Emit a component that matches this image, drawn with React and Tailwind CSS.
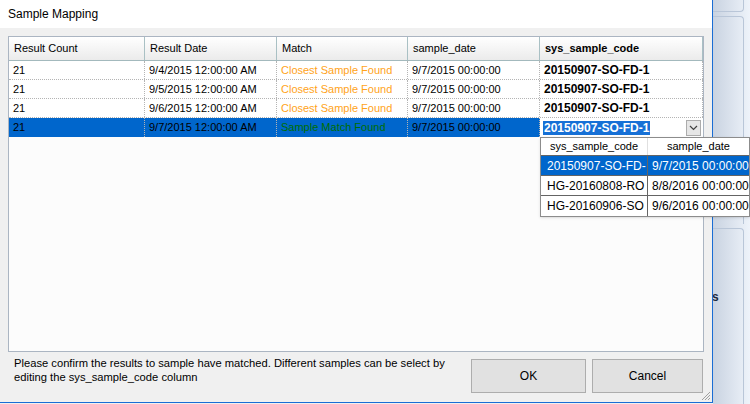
import React from 'react'

const columns = [
  { label: 'Result Count', w: 'w-[136px]' },
  { label: 'Result Date', w: 'w-[132px]' },
  { label: 'Match', w: 'w-[131px]' },
  { label: 'sample_date', w: 'w-[132px]' },
  { label: 'sys_sample_code', w: 'flex-1', bold: true },
]

const rows = [
  { count: '21', date: '9/4/2015 12:00:00 AM', match: 'Closest Sample Found', sdate: '9/7/2015 00:00:00', code: '20150907-SO-FD-1' },
  { count: '21', date: '9/5/2015 12:00:00 AM', match: 'Closest Sample Found', sdate: '9/7/2015 00:00:00', code: '20150907-SO-FD-1' },
  { count: '21', date: '9/6/2015 12:00:00 AM', match: 'Closest Sample Found', sdate: '9/7/2015 00:00:00', code: '20150907-SO-FD-1' },
]

const options = [
  { code: '20150907-SO-FD-', date: '9/7/2015 00:00:00', selected: true },
  { code: 'HG-20160808-RO', date: '8/8/2016 00:00:00' },
  { code: 'HG-20160906-SO', date: '9/6/2016 00:00:00' },
]

function Cell({ w, children, className = '' }) {
  return (
    <div className={`${w} h-full flex items-center pl-[4px] border-r border-dotted border-[#b4b4b4] whitespace-nowrap overflow-hidden ${className}`}>
      {children}
    </div>
  )
}

export default function App() {
  return (
    <div
      className="relative w-[750px] h-[404px] flex overflow-hidden bg-[#f0f0f0] text-[11px] text-black"
      style={{ fontFamily: '"Liberation Sans", Arial, sans-serif' }}
    >
      {/* dialog */}
      <div className="relative w-[713px] h-[403px] flex flex-col border-r border-b border-[#1a6dd4]">
        <div className="h-[28px] bg-white flex items-center pl-[8px] text-[12px] shrink-0">Sample Mapping</div>

        <div className="flex-1 flex flex-col px-[8px] pt-[8px]">
          {/* grid */}
          <div className="w-[696px] h-[316px] border border-[#abb5c2] bg-[#fcfcfc] flex flex-col">
            <div className="h-[24px] flex border-b border-[#a3b9bd] bg-gradient-to-b from-white to-[#ebebeb] shrink-0">
              {columns.map(c => (
                <div
                  key={c.label}
                  className={`${c.w} h-full flex items-center pl-[5px] border-r border-[#a9c0c4] ${c.bold ? 'font-bold' : ''}`}
                >
                  {c.label}
                </div>
              ))}
            </div>

            {rows.map((r, i) => (
              <div key={i} className="h-[19px] flex border-b border-dotted border-[#b4b4b4] bg-white">
                <Cell w="w-[136px]">{r.count}</Cell>
                <Cell w="w-[132px]">{r.date}</Cell>
                <Cell w="w-[131px]" className="text-[#ffa31a]">{r.match}</Cell>
                <Cell w="w-[132px]">{r.sdate}</Cell>
                <Cell w="flex-1" className="font-bold text-[12px]">{r.code}</Cell>
              </div>
            ))}

            {/* selected / editing row */}
            <div className="h-[19px] flex">
              <Cell w="w-[136px]" className="bg-[#0066cc]">21</Cell>
              <Cell w="w-[132px]" className="bg-[#0066cc]">9/7/2015 12:00:00 AM</Cell>
              <Cell w="w-[131px]" className="bg-[#0066cc] text-[#006e00]">Sample Match Found</Cell>
              <Cell w="w-[132px]" className="bg-[#0066cc]">9/7/2015 00:00:00</Cell>
              <div className="flex-1 h-[20px] bg-white flex items-center pl-[3px] pr-[2px]">
                <span className="bg-[#1670d6] text-white font-bold text-[12px] leading-[14px] px-[1px]">20150907-SO-FD-1</span>
                <div className="ml-auto w-[15px] h-[16px] border border-[#acacac] bg-[#e6e6e6] flex items-center justify-center">
                  <svg width="9" height="6" viewBox="0 0 9 6">
                    <path d="M1 1l3.5 3.5L8 1" fill="none" stroke="#404040" strokeWidth="1.2" />
                  </svg>
                </div>
              </div>
            </div>
          </div>

          {/* footer */}
          <div className="flex justify-between">
            <p className="pl-[6px] pt-[4px] leading-[14px] w-[456px] text-[11.2px]">
              Please confirm the results to sample have matched. Different samples can be select by editing the sys_sample_code column
            </p>
            <div className="flex gap-[6px] pt-[7px] pr-[1px]">
              <button className="w-[115px] h-[34px] bg-[#e1e1e1] border border-[#adadad] text-[12px]">OK</button>
              <button className="w-[111px] h-[34px] bg-[#e1e1e1] border border-[#adadad] text-[12px]">Cancel</button>
            </div>
          </div>
        </div>

        {/* size grip */}
        <svg className="absolute right-[1px] bottom-[1px]" width="12" height="12" viewBox="0 0 12 12">
          <path d="M11 3L3 11M11 6L6 11M11 9L9 11" stroke="#a0a0a0" strokeWidth="1" />
        </svg>
      </div>

      {/* window behind */}
      <div className="flex-1 h-full flex flex-col gap-[4px] pr-[6px] bg-gradient-to-r from-[#c9d3e1] to-[#eef3fa]">
        <div className="h-[12px] border-r border-b border-[#b9c6d8] rounded-br-[4px] shrink-0" />
        <div className="h-[208px] border-r border-t border-[#b9c6d8] rounded-tr-[4px] shrink-0" />
        <div className="flex-1 border-r border-t border-[#b9c6d8] rounded-tr-[4px]">
          <div className="mt-[59px] font-bold text-[12px] text-[#1e2a3c] -ml-[1px]">s</div>
        </div>
      </div>

      {/* dropdown list */}
      <div className="absolute left-[540px] top-[137px] w-[210px] bg-white border border-[#8c8c8c] shadow-sm">
        <div className="h-[18px] flex border-b border-[#646464]">
          <div className="w-[107px] flex items-center justify-center border-r border-[#e0e0e0]">sys_sample_code</div>
          <div className="flex-1 flex items-center justify-center">sample_date</div>
        </div>
        {options.map((o, i) => (
          <div
            key={i}
            className={`h-[20px] flex border-b border-[#646464] last:border-b-0 text-[12px] ${o.selected ? 'bg-[#0066cc] text-white' : ''}`}
          >
            <div className="w-[107px] flex items-center pl-[6px] border-r border-[#646464] whitespace-nowrap overflow-hidden">{o.code}</div>
            <div className="flex-1 flex items-center pl-[4px] whitespace-nowrap">{o.date}</div>
          </div>
        ))}
      </div>
    </div>
  )
}
